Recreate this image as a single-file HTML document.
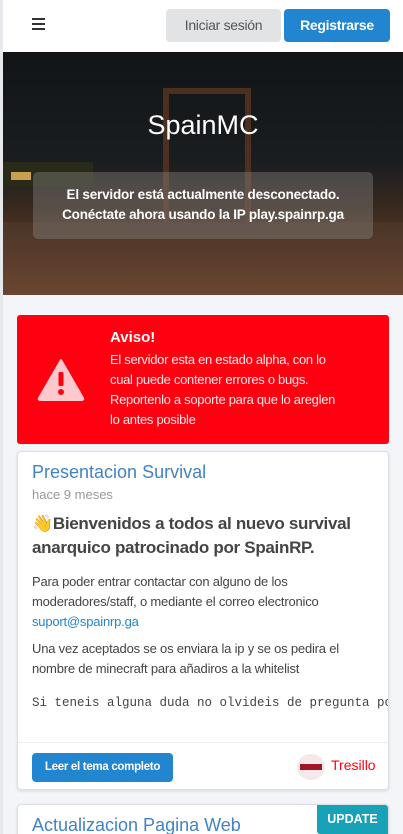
<!DOCTYPE html>
<html><head><meta charset="utf-8"><style>
*{box-sizing:border-box;margin:0;padding:0}
html,body{width:403px;height:834px;overflow:hidden}
body{background:#f3f5f9;font-family:"Liberation Sans",sans-serif;position:relative}
.lb{position:absolute;left:0;top:0;width:3px;height:834px;background:#e6e8ec}
.hdr{position:absolute;left:3px;top:0;width:400px;height:52px;background:#fff}
.ham{position:absolute;left:29px;top:18px;width:13px}
.ham i{display:block;height:2px;background:#333;margin-bottom:3px}
.btn{position:absolute;top:9px;height:33px;border-radius:4px;font-size:14px;line-height:33px;text-align:center;letter-spacing:-.3px}
.hero{position:absolute;left:3px;top:52px;width:400px;height:243px;overflow:hidden;
background:linear-gradient(180deg,#121518 0%,#1a1d20 45%,#3a2a1f 65%,#5a3a25 80%,#3a2518 100%)}
.alert{position:absolute;left:17px;top:315px;width:372px;height:129px;background:#ff0010;border-radius:3px;color:#fff}
.card{position:absolute;left:17px;width:372px;background:#fff;border:1px solid #dcdfe3;border-radius:4px;box-shadow:0 1px 3px rgba(0,0,0,.12);overflow:hidden}
</style></head><body>
<div class="lb"></div>
<div class="hdr">
<div class="ham"><i></i><i></i><i></i></div>
<div class="btn" style="left:163px;width:115px;background:#e2e3e5;color:#555">Iniciar sesión</div>
<div class="btn" style="left:281px;width:106px;background:#2185d0;color:#fff;font-weight:bold">Registrarse</div>
</div>
<div class="hero">
<div style="position:absolute;left:160px;top:36px;width:88px;height:200px;border:6px solid #5a3520;border-bottom:none;opacity:.8"></div>
<div style="position:absolute;left:0;top:170px;width:400px;height:73px;background:linear-gradient(180deg,#4a3528,#6a4530)"></div>
<div style="position:absolute;left:0;top:110px;width:90px;height:25px;background:#2a2a18"></div>
<div style="position:absolute;left:8px;top:120px;width:20px;height:8px;background:#c9a050"></div>
<div style="position:absolute;left:0;top:58px;width:400px;text-align:center;color:#fff;font-size:27px">SpainMC</div>
<div style="position:absolute;left:30px;top:120px;width:340px;height:67px;background:rgba(150,150,150,.35);border-radius:5px;color:#fff;font-weight:bold;font-size:13.5px;letter-spacing:-.2px;text-align:center;line-height:20px;padding-top:13px">El servidor está actualmente desconectado.<br>Conéctate ahora usando la IP play.spainrp.ga</div>
</div>
<div class="alert">
<svg style="position:absolute;left:20px;top:43px" width="48" height="43" viewBox="0 0 48 43"><path d="M24 2 L46 40 Q47 42 44 42 L4 42 Q1 42 2 40 Z" fill="#ffc8cc" stroke="#ffc8cc" stroke-linejoin="round" stroke-width="2"/><rect x="21.5" y="14" width="5" height="14" rx="1.5" fill="#ff0010"/><circle cx="24" cy="34" r="3" fill="#ff0010"/></svg>
<div style="position:absolute;left:93px;top:14px;font-weight:bold;font-size:15px">Aviso!</div>
<div style="position:absolute;left:93px;top:35px;width:262px;font-size:13px;letter-spacing:-.3px;line-height:20px;color:#ffe8ea">El servidor esta en estado alpha, con lo<br>cual puede contener errores o bugs.<br>Reportenlo a soporte para que lo areglen<br>lo antes posible</div>
</div>
<div class="card" style="top:451px;height:339px">
<div style="position:absolute;left:14px;top:10px;font-size:18px;color:#4183c4">Presentacion Survival</div>
<div style="position:absolute;left:14px;top:35px;font-size:13px;color:#999">hace 9 meses</div>
<div style="position:absolute;left:14px;top:60px;width:350px;font-size:17px;letter-spacing:-.3px;font-weight:bold;color:#444;line-height:24px">👋Bienvenidos a todos al nuevo survival anarquico patrocinado por SpainRP.</div>
<div style="position:absolute;left:14px;top:120px;width:345px;font-size:13px;letter-spacing:-.2px;color:#444;line-height:20px">Para poder entrar contactar con alguno de los moderadores/staff, o mediante el correo electronico <span style="color:#2185d0">suport@spainrp.ga</span></div>
<div style="position:absolute;left:14px;top:187px;width:345px;font-size:13px;letter-spacing:-.2px;color:#444;line-height:20px">Una vez aceptados se os enviara la ip y se os pedira el nombre de minecraft para añadiros a la whitelist</div>
<div style="position:absolute;left:14px;top:244px;white-space:nowrap;font-family:'Liberation Mono',monospace;font-size:12.5px;color:#444">Si teneis alguna duda no olvideis de pregunta por</div>
<div style="position:absolute;left:0;top:290px;width:372px;border-top:1px solid #eee"></div>
<div style="position:absolute;left:14px;top:301px;width:141px;height:29px;background:#2185d0;border-radius:4px;color:#fff;font-weight:bold;font-size:11.5px;letter-spacing:-.3px;line-height:29px;text-align:center">Leer el tema completo</div>
<div style="position:absolute;left:279px;top:302px;width:28px;height:26px;border-radius:50%;background:#f4e8ea"><div style="position:absolute;left:3px;top:10px;width:22px;height:6px;background:#a01828"></div></div>
<div style="position:absolute;left:313px;top:305px;font-size:14px;color:#ff0010">Tresillo</div>
</div>
<div class="card" style="top:804px;height:60px">
<div style="position:absolute;left:14px;top:10px;font-size:18px;color:#4183c4">Actualizacion Pagina Web</div>
<div style="position:absolute;right:0;top:0;width:71px;height:29px;background:#17a2b8;color:#fff;font-weight:bold;font-size:12.5px;line-height:29px;text-align:center;border-radius:0 0 0 3px">UPDATE</div>
</div>
</body></html>
